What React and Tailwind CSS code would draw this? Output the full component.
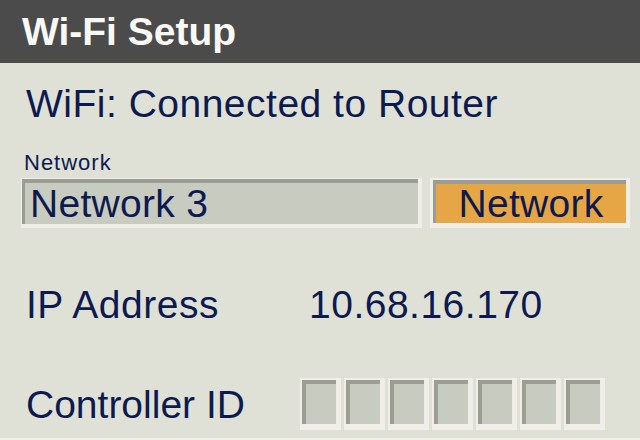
import React from "react";

const font = { fontFamily: '"Liberation Sans", Arial, sans-serif' };

function Box() {
  return (
    <div className="w-[41px] h-[52px] bg-[#f1eeea] pt-[2px] pl-[2px] pr-[5px] pb-[6px]">
      <div className="w-full h-full bg-[#c8cbbf] border-t-[4px] border-l-[4px] border-[#9b9d95]" />
    </div>
  );
}

export default function App() {
  return (
    <div className="w-[640px] h-[440px] flex flex-col bg-[#dfe1d7] text-[#0d1a4f] overflow-hidden" style={font}>
      <div className="h-[63px] bg-[#4b4b4b] flex items-center pl-[22px]">
        <span className="text-[39px] leading-[39px] font-bold text-[#f8f8f4]">Wi-Fi Setup</span>
      </div>

      <div className="mt-[21px] pl-[26px] text-[39px] leading-[39px] tracking-[0.5px]">WiFi:&nbsp;Connected to Router</div>

      <div className="mt-[29px] pl-[24px] text-[22px] leading-[22px] tracking-[1px]">Network</div>

      <div className="mt-[4px] pl-[21px] flex gap-[8px]">
        <div className="w-[401px] h-[50px] bg-[#f1eeea] pt-[1px] pl-[1px] pr-[4px] pb-[4px]">
          <div className="w-full h-full bg-[#c8cbbf] border-t-[4px] border-l-[3px] border-[#9b9d95] flex items-center pl-[5px] text-[39px] leading-[39px] tracking-[0.3px]">
            Network 3
          </div>
        </div>
        <div className="w-[200px] h-[50px] bg-[#f1eeea] pt-[2px] pl-[3px] pr-[4px] pb-[5px]">
          <div className="w-full h-full bg-[#e6a646] border-t-[4px] border-l-[3px] border-[#9b9d95] flex items-center justify-center text-[39px] leading-[39px] tracking-[0.3px]">
            Network
          </div>
        </div>
      </div>

      <div className="mt-[57px] pl-[26px] flex text-[39px] leading-[39px] tracking-[0.5px]">
        <div className="w-[283px]">IP Address</div>
        <div>10.68.16.170</div>
      </div>

      <div className="mt-[54px] pl-[26px] flex items-center">
        <div className="w-[274px] text-[39px] leading-[39px] pt-[1px]">Controller ID</div>
        <div className="flex gap-[3px]">
          <Box />
          <Box />
          <Box />
          <Box />
          <Box />
          <Box />
          <Box />
        </div>
      </div>

      <div className="mt-auto h-[2px] bg-[#f1eeea]" />
    </div>
  );
}
